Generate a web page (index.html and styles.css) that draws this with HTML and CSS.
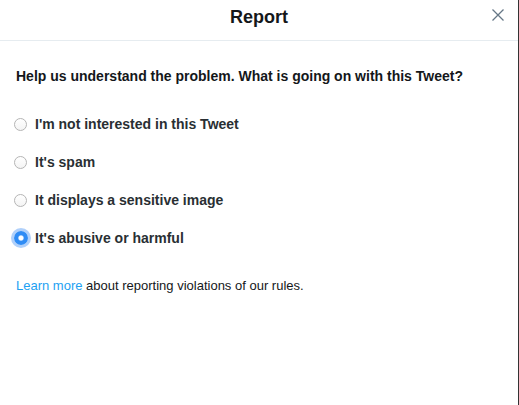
FILE: index.html
```html
<!DOCTYPE html>
<html lang="en">
<head>
    <meta charset="UTF-8">
    <title>Report</title>
    <link rel="stylesheet" href="styles.css">
</head>
<body>
    <div class="modal">
        <div class="modal-header">
            <h1>Report</h1>
            <button class="close-button" aria-label="Close">
                <svg width="12" height="12" viewBox="0 0 12 12">
                    <path d="M0.5 0.5 L11.5 11.5 M11.5 0.5 L0.5 11.5" stroke="#657786" stroke-width="1.3" fill="none"/>
                </svg>
            </button>
        </div>

        <div class="modal-body">
            <p class="question">Help us understand the problem. What is going on with this Tweet?</p>

            <form class="options">
                <label class="option"><input type="radio" name="reason"><span>I'm not interested in this Tweet</span></label>
                <label class="option"><input type="radio" name="reason"><span>It's spam</span></label>
                <label class="option"><input type="radio" name="reason"><span>It displays a sensitive image</span></label>
                <label class="option"><input type="radio" name="reason" checked><span>It's abusive or harmful</span></label>
            </form>

            <p class="learn-more"><a href="#">Learn more</a> about reporting violations of our rules.</p>
        </div>
    </div>
</body>
</html>
```

FILE: styles.css
```css
* {
    margin: 0;
    padding: 0;
    box-sizing: border-box;
}

html, body {
    height: 100%;
}

body {
    font-family: "Liberation Sans", Arial, sans-serif;
    background-color: #fff;
    color: #14171a;
}

.modal {
    height: 100%;
    border-right: 1px solid #333;
}

.modal-header {
    height: 41px;
    border-bottom: 1px solid #e6ecf0;
    display: flex;
    align-items: center;
    justify-content: center;
    position: relative;
}

.modal-header h1 {
    font-size: 18px;
    font-weight: bold;
    color: #14171a;
    margin-top: -5px;
}

.close-button {
    position: absolute;
    right: 14px;
    top: 9px;
    background: none;
    border: none;
    width: 12px;
    height: 12px;
    cursor: pointer;
    display: flex;
}

.modal-body {
    padding: 0 16px;
}

.question {
    font-size: 14px;
    font-weight: bold;
    margin-top: 26px;
    line-height: 18px;
}

.options {
    display: flex;
    flex-direction: column;
    margin-top: 20px;
}

.option {
    display: flex;
    align-items: center;
    height: 38px;
    font-size: 14px;
    font-weight: bold;
    color: #292f33;
}

.option input {
    appearance: none;
    -webkit-appearance: none;
    width: 13px;
    height: 13px;
    margin: 0 8px 0 -2px;
    border: 1px solid #b5b5b5;
    border-radius: 50%;
    background: linear-gradient(#fff, #f4f4f4);
    flex-shrink: 0;
}

.option input:checked {
    width: 14px;
    height: 14px;
    margin-right: 7px;
    border: none;
    background: radial-gradient(circle, #fff 0, #fff 2px, #2f8cf5 3.2px);
    box-shadow: 0 0 0 3px rgba(80, 150, 245, 0.45);
}

.learn-more {
    font-size: 13px;
    color: #14171a;
    margin-top: 21px;
}

.learn-more a {
    color: #1da1f2;
    text-decoration: none;
}
```
